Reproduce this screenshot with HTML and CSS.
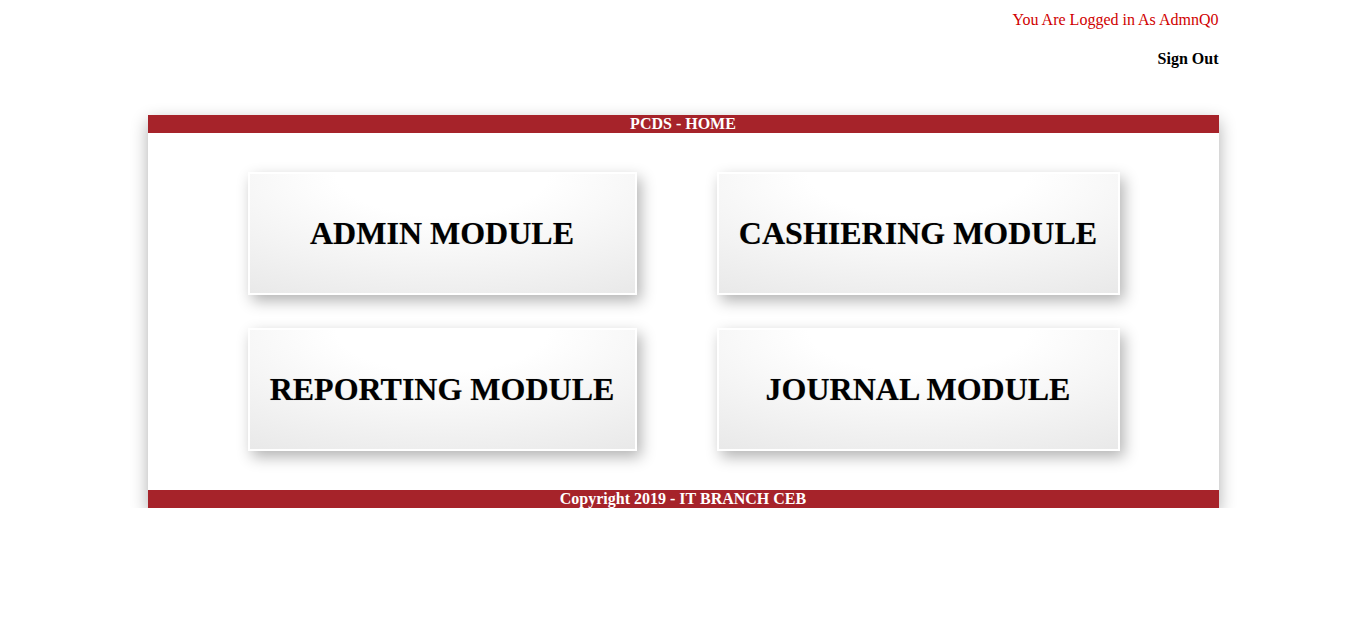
FILE: index.html
```html
<!DOCTYPE html>
<html>
<head>
<meta charset="utf-8">
<title>PCDS - HOME</title>
<link rel="stylesheet" href="styles.css">
</head>
<body>
<div class="page">
  <div class="userbar">
    <div class="logged">You Are Logged in As AdmnQ0</div>
    <a class="signout" href="#">Sign Out</a>
  </div>
  <div class="panel">
    <div class="bar">PCDS - HOME</div>
    <div class="modules">
      <a class="card" href="#">ADMIN MODULE</a>
      <a class="card" href="#">CASHIERING MODULE</a>
      <a class="card" href="#">REPORTING MODULE</a>
      <a class="card" href="#">JOURNAL MODULE</a>
    </div>
    <div class="bar">Copyright 2019 - IT BRANCH CEB</div>
  </div>
</div>
</body>
</html>
```
FILE: styles.css
```css
html, body {
  margin: 0;
  padding: 0;
  background: #fff;
  font-family: "Liberation Serif", "Times New Roman", serif;
  font-size: 16px;
}
.page {
  width: 1071px;
  margin: 0 auto;
}
.userbar {
  display: flex;
  flex-direction: column;
  align-items: flex-end;
  padding-top: 11px;
  height: 115px;
  box-sizing: border-box;
}
.logged {
  color: #d00000;
  line-height: 18px;
}
.signout {
  margin-top: 21px;
  color: #000;
  font-weight: bold;
  text-decoration: none;
  line-height: 18px;
}
.panel {
  background: #fff;
  box-shadow: 0 6px 16px rgba(0, 0, 0, 0.32);
}
.bar {
  background: #a6232a;
  color: #fff;
  font-weight: bold;
  text-align: center;
  height: 18px;
  line-height: 18px;
}
.modules {
  display: grid;
  grid-template-columns: 389px 403px;
  column-gap: 80px;
  row-gap: 33px;
  justify-content: center;
  padding: 39px 0 39px 1px;
}
.card {
  height: 123px;
  box-sizing: border-box;
  border: 2px solid #fff;
  background: radial-gradient(ellipse 110% 140% at 50% 0%, #ffffff 25%, #e3e3e3 100%);
  box-shadow: 4px 6px 14px rgba(0, 0, 0, 0.3);
  display: flex;
  align-items: center;
  justify-content: center;
  color: #000;
  text-decoration: none;
  font-weight: bold;
  font-size: 32px;
  text-shadow: 0 0 1px rgba(0, 0, 0, 0.3);
}
```
